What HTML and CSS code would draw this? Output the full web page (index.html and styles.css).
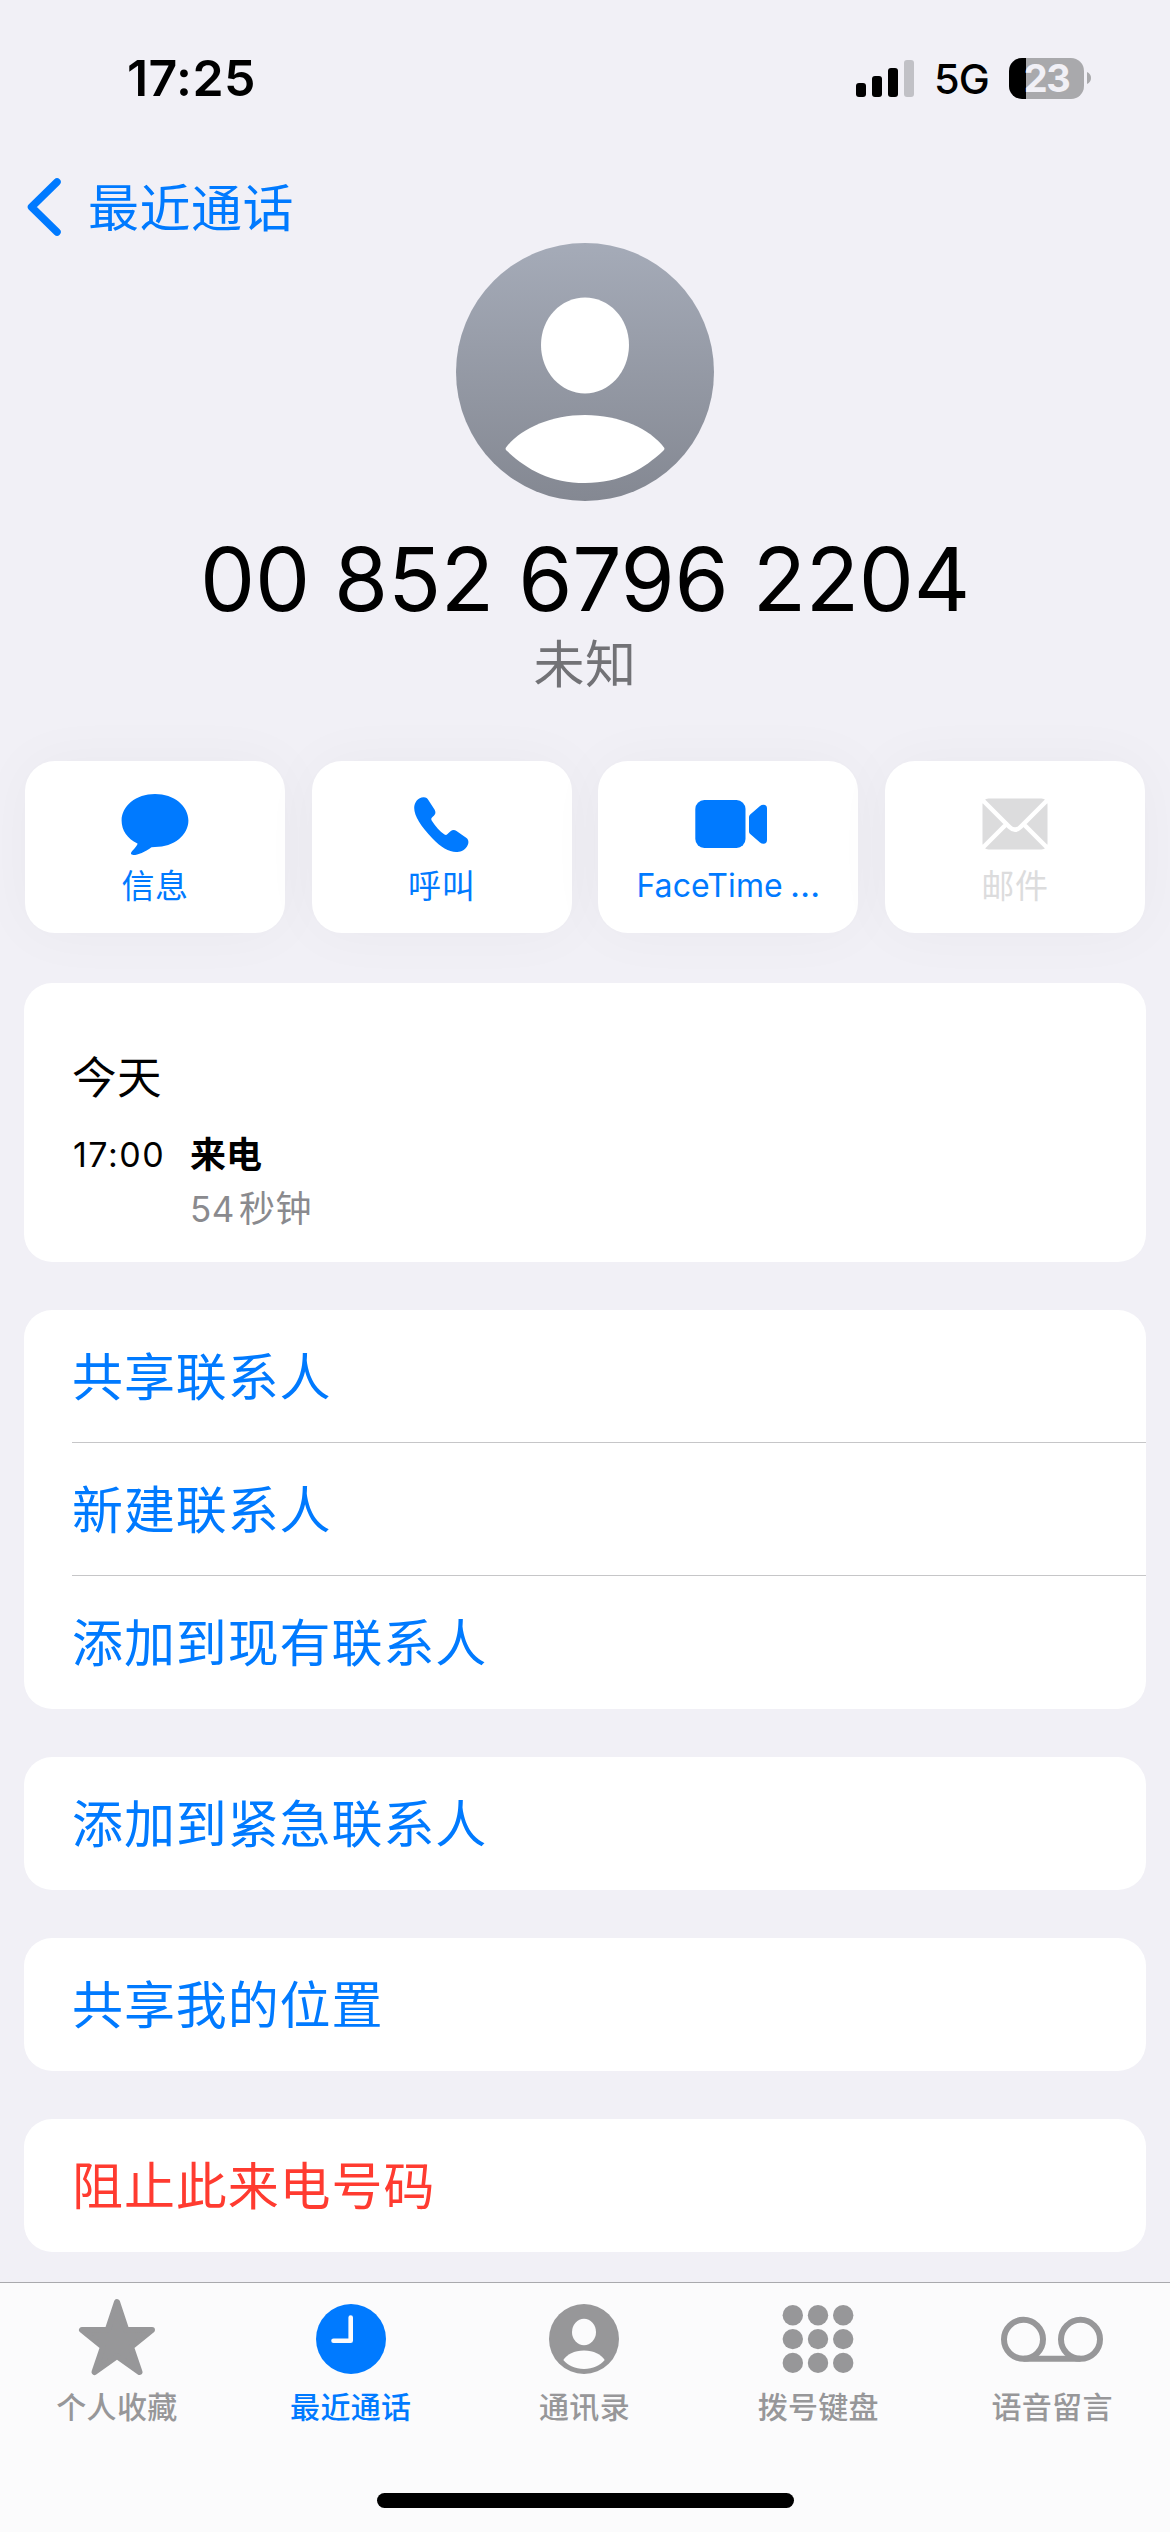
FILE: index.html
```html
<!DOCTYPE html>
<html lang="zh-CN">
<head>
<meta charset="utf-8">
<title>最近通话</title>
<link rel="stylesheet" href="styles.css">
</head>
<body>
<header class="status">
  <span class="clock">17:25</span>
  <div class="indicators">
    <svg class="signal" width="58" height="37" viewBox="0 0 58 37">
      <rect x="0" y="23" width="10" height="14" rx="3"/>
      <rect x="16" y="16" width="10" height="21" rx="3"/>
      <rect x="32" y="8" width="10" height="29" rx="3"/>
      <rect x="48" y="0" width="10" height="37" rx="3" fill="#c1c1c6"/>
    </svg>
    <span class="network">5G</span>
    <div class="battery"><span class="level">23</span></div>
    <svg class="battery-cap" width="4" height="12" viewBox="0 0 4 12"><path d="M0 0Q4 1.800 4 6T0 12Z" fill="#a9a9ac"/></svg>
  </div>
</header>
<nav class="back">
  <svg width="34" height="58" viewBox="0 0 34 58"><path d="M30 4L4.500 29L30 54" fill="none" stroke="#007aff" stroke-width="7.500" stroke-linecap="round" stroke-linejoin="round"/></svg>
  <span>最近通话</span>
</nav>
<main>
  <section class="contact">
    <svg class="avatar" width="258" height="258" viewBox="0 0 258 258">
      <defs><linearGradient id="shade" x1="0" y1="0" x2="0" y2="1"><stop offset="0" stop-color="#a5abb8"/><stop offset="1" stop-color="#848892"/></linearGradient></defs>
      <circle cx="129" cy="129" r="129" fill="url(#shade)"/>
      <path d="M129 54.500C153 54.500 173 75 173 102S153 150.500 129 150.500S85 129 85 102S105 54.500 129 54.500Z" fill="#fff"/>
      <path d="M50 204.500C64 186 94 172 129 172S194 186 208 204.500Q209 206 207.500 207.500C188 226 164 240 129 240S70 226 50.500 207.500Q49 206 50 204.500Z" fill="#fff"/>
    </svg>
    <h1 class="number">00 852 6796 2204</h1>
    <p class="kind">未知</p>
  </section>
  <section class="actions">
    <div class="action">
      <svg width="78" height="66" viewBox="0 0 78 66"><path d="M39 3C58 3 72.400 15 72.400 29.500S58 56 39 56L35.500 56.200C29 61 22 64 17.500 64C14.500 64 14.500 62 16 60.300C19 57 21.500 54 21.500 52.500C11 47.500 5.600 39 5.600 29.500C5.600 15 20 3 39 3Z"/></svg>
      <span>信息</span>
    </div>
    <div class="action">
      <svg width="78" height="66" viewBox="0 0 78 66"><path d="M20.500 6.300C23 6.200 24.500 7.500 25.500 9.300L31.500 18.500C33.500 22 32 24 29 26.500C28 27.500 28 28.500 29 30C32.500 35.500 37 40.500 41.500 43.500C42.700 44.200 43.500 44 44.500 43L47.500 40.300C49.500 38.500 51.500 38.500 53.500 40L63.500 47C66 49 66 52.500 64 55.500C61 60 57 61 53 61C46 61 37.500 56 29.500 47.500C18 35.500 11.200 25 11.200 17C11.200 11.500 15 6.500 20.500 6.300Z"/></svg>
      <span>呼叫</span>
    </div>
    <div class="action">
      <svg width="78" height="66" viewBox="0 0 78 66"><rect x="6.300" y="9" width="50.200" height="48" rx="9"/><path d="M60 26Q60 24.500 61.200 23.400L71 15Q72.500 13.800 74.500 13.800Q78 13.800 78 17.500V49Q78 52.700 74.500 52.700Q72.500 52.700 71 51.500L61.200 43Q60 42 60 40.500Z"/></svg>
      <span class="latin">FaceTime <i>…</i></span>
    </div>
    <div class="action disabled">
      <svg width="78" height="66" viewBox="0 0 78 66"><rect x="6.500" y="7.500" width="65" height="51" rx="6"/><path d="M7 9.500L33.500 36Q39 41.500 44.500 36L71 9.500M7 56.500L30.500 33M71 56.500L47.500 33" fill="none" stroke="#fff" stroke-width="4.500"/></svg>
      <span>邮件</span>
    </div>
  </section>
  <section class="card history">
    <h2>今天</h2>
    <div class="call">
      <time>17:00</time>
      <div><strong>来电</strong><p>54<span>秒钟</span></p></div>
    </div>
  </section>
  <section class="card">
    <div class="row">共享联系人</div>
    <div class="row">新建联系人</div>
    <div class="row">添加到现有联系人</div>
  </section>
  <section class="card"><div class="row">添加到紧急联系人</div></section>
  <section class="card"><div class="row">共享我的位置</div></section>
  <section class="card"><div class="row danger">阻止此来电号码</div></section>
</main>
<footer class="dock">
  <div class="tabs">
    <div class="tab">
      <svg width="104" height="80" viewBox="0 0 104 80"><path d="M52 5L61.200 32.700L87 33L66 50L74.500 75L52 59L29.500 75L38 50L17 33L42.800 32.700Z" stroke="currentColor" stroke-width="6" stroke-linejoin="round"/></svg>
      <span>个人收藏</span>
    </div>
    <div class="tab active">
      <svg width="104" height="80" viewBox="0 0 104 80"><circle cx="52" cy="42" r="35"/><path d="M51.700 20.500V43.700H34.500" fill="none" stroke="#fbfbfc" stroke-width="4.600" stroke-linecap="round" stroke-linejoin="round"/></svg>
      <span>最近通话</span>
    </div>
    <div class="tab">
      <svg width="104" height="80" viewBox="0 0 104 80"><circle cx="52" cy="42" r="35"/><ellipse cx="52" cy="35" rx="12" ry="13.200" fill="#fbfbfc"/><path d="M31.300 63C35 57.500 42 53.500 52 53.500S69 57.500 72.700 63C68 68.500 61 72 52 72S36 68.500 31.300 63Z" fill="#fbfbfc"/></svg>
      <span>通讯录</span>
    </div>
    <div class="tab">
      <svg width="104" height="80" viewBox="0 0 104 80"><circle cx="26.800" cy="18.300" r="10.200"/><circle cx="52" cy="18.300" r="10.200"/><circle cx="77.200" cy="18.300" r="10.200"/><circle cx="26.800" cy="42.100" r="10.200"/><circle cx="52" cy="42.100" r="10.200"/><circle cx="77.200" cy="42.100" r="10.200"/><circle cx="26.800" cy="65.900" r="10.200"/><circle cx="52" cy="65.900" r="10.200"/><circle cx="77.200" cy="65.900" r="10.200"/></svg>
      <span>拨号键盘</span>
    </div>
    <div class="tab">
      <svg width="104" height="80" viewBox="0 0 104 80"><g fill="none" stroke="currentColor" stroke-width="6"><circle cx="23.500" cy="42.300" r="19.500"/><circle cx="80.500" cy="42.300" r="19.500"/><path d="M23.500 61.800H80.500"/></g></svg>
      <span>语音留言</span>
    </div>
  </div>
  <div class="home"></div>
</footer>
</body>
</html>
```
FILE: styles.css
```css
* { box-sizing: border-box; margin: 0; padding: 0; }

body {
  width: 1170px;
  height: 2532px;
  display: flex;
  flex-direction: column;
  overflow: hidden;
  background: #f1f0f6;
  color: #000;
  font-family: Inter, "Noto Sans CJK SC", sans-serif;
}

svg { display: block; flex: none; }

.status {
  height: 156px;
  display: flex;
  justify-content: space-between;
  padding: 0 79px 0 127px;
}

.clock { font-size: 50px; line-height: 156px; font-weight: 600; letter-spacing: 0.4px; }

.indicators { display: flex; align-items: center; }

.network { margin-left: 20px; width: 75px; font-size: 41.5px; font-weight: 450; line-height: 60px; padding-top: 1px; letter-spacing: -1px; }

.battery {
  width: 75px;
  height: 41px;
  border-radius: 13px;
  background: linear-gradient(90deg, #000 17px, #a9a9ac 17px);
  display: flex;
  justify-content: center;
}

.level { font-size: 38px; font-weight: 700; line-height: 41px; letter-spacing: -1.5px; color: #f1f0f6; }

.battery-cap { margin-left: 3px; }

.back {
  height: 87px;
  padding: 22px 0 0 27px;
  display: flex;
  gap: 27px;
  color: #007aff;
  font-size: 51px;
  letter-spacing: 0.5px;
  line-height: 61px;
}

.contact { display: flex; flex-direction: column; align-items: center; height: 518px; }

.number { margin-top: 24px; font-size: 87.5px; line-height: 108px; font-weight: 400; letter-spacing: -0.3px; white-space: pre; }

.kind { margin-top: 4px; font-size: 51px; line-height: 56px; letter-spacing: 0.5px; color: #727276; }

.actions { display: grid; grid-template-columns: repeat(4, 260px); justify-content: space-between; padding: 0 25px; }

.action {
  height: 172px;
  border-radius: 30px;
  background: #fff;
  box-shadow: 0 0 60px rgba(0, 0, 0, 0.035);
  display: flex;
  flex-direction: column;
  align-items: center;
  padding-top: 30px;
  color: #007aff;
  font-size: 33px;
  letter-spacing: 0.6px;
}

.action svg { fill: currentColor; }
.action span { line-height: 40px; margin-top: 9px; }
.action .latin { font-size: 32px; letter-spacing: 0.1px; word-spacing: -2px; }
.latin i { font-style: normal; font-size: 35px; line-height: 1; }
.disabled { color: #dcdcdd; }

.card { margin: 48px 24px 0; border-radius: 28px; background: #fff; }
.actions + .card { margin-top: 50px; }

.history { height: 279px; padding: 65px 48px 0; }
.history h2 { font-size: 44.5px; font-weight: 400; line-height: 60px; letter-spacing: 0.5px; }

.call { display: flex; margin-top: 21px; font-size: 36px; line-height: 52px; }
.call time { width: 118px; padding-left: 1px; font-size: 34px; letter-spacing: 1.5px; }
.call strong { display: block; font-weight: 600; line-height: 52px; }
.call p { color: #8a8a8e; line-height: 57px; font-size: 35px; letter-spacing: 0.5px; }
.call p span { margin-left: 4px; font-size: 36px; }

.row {
  height: 133px;
  margin-left: 48px;
  line-height: 136px;
  font-size: 51px;
  letter-spacing: 0.9px;
  color: #007aff;
}
.row:not(:last-child) { border-bottom: 1px solid #c6c6c8; }
.danger { color: #ff3b30; }

.dock {
  margin-top: auto;
  height: 250px;
  border-top: 1px solid #a9a9ad;
  background: #fbfbfc;
}

.tabs { display: grid; grid-template-columns: repeat(5, 233.8px); padding-top: 14px; height: 210px; }

.tab {
  display: flex;
  flex-direction: column;
  align-items: center;
  color: #979799;
  font-size: 30px;
  font-weight: 500;
  letter-spacing: 0.3px;
}
.tab svg { fill: currentColor; }
.tab span { margin-top: 10px; line-height: 40px; }
.active { color: #007aff; }

.home { width: 417px; height: 15px; margin: 0 auto; border-radius: 8px; background: #000; }
```
